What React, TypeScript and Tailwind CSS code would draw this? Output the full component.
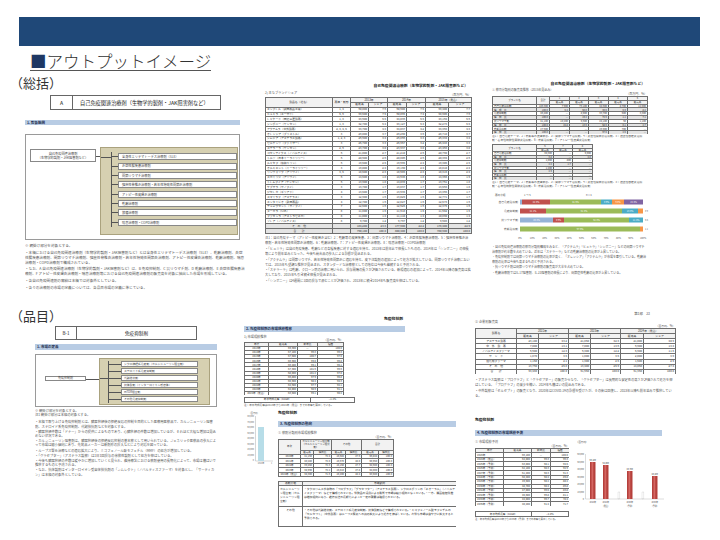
import React from "react";

type Cell = string | { t: string; c?: number; r?: number; a?: "l" | "c" | "r"; wrap?: boolean; tight?: boolean };

function Tbl({
  w,
  rows,
  h,
  head = 1,
  gray = [],
  fs = "text-[3px]",
}: {
  w: number[];
  rows: Cell[][];
  h: number | number[];
  head?: number;
  gray?: number[];
  fs?: string;
}) {
  const total = w.reduce((a, b) => a + b, 0);
  return (
    <table className={`table-fixed border-collapse leading-none text-[#333] ${fs}`} style={{ width: total }}>
      <colgroup>
        {w.map((x, i) => (
          <col key={i} style={{ width: x }} />
        ))}
      </colgroup>
      <tbody>
        {rows.map((r, ri) => (
          <tr
            key={ri}
            style={{ height: Array.isArray(h) ? h[ri] : h }}
            className={ri < head ? "bg-[#f2f2f2]" : gray.includes(ri) ? "bg-[#e4e4e4]" : "bg-white"}
          >
            {r.map((c, ci) => {
              const o = typeof c === "string" ? { t: c } : c;
              const a = o.a ?? (ri < head ? "c" : ci === 0 ? "l" : "r");
              const ws = o.tight
                ? "whitespace-normal leading-[2.9px]"
                : o.wrap
                  ? "whitespace-normal leading-[4px] align-top py-[1px]"
                  : "whitespace-nowrap";
              return (
                <td
                  key={ci}
                  colSpan={o.c}
                  rowSpan={o.r}
                  className={`border border-[#6f6f6f] p-0 px-[1px] overflow-hidden ${ws} ${a === "l" ? "text-left" : a === "c" ? "text-center" : "text-right"}`}
                >
                  {o.t}
                </td>
              );
            })}
          </tr>
        ))}
      </tbody>
    </table>
  );
}

const fmt = (n: number) => Math.round(n).toLocaleString("en-US");

function HeadBar({ label, cls }: { label: string; cls: string }) {
  return (
    <div className={`flex items-center bg-[#b8cce4] pl-[2px] text-[3.5px] font-bold leading-none text-[#1f2f4f] ${cls}`}>
      {label}
    </div>
  );
}

// ---------- top-left: 対象範囲 ----------
const topItems = [
  "全身性エリテマトーデス治療剤（SLE）",
  "炎症性腸疾患治療剤",
  "関節リウマチ治療剤",
  "強直性脊椎炎治療剤・若年性特発性関節炎治療剤",
  "アトピー性皮膚炎治療剤",
  "乾癬治療剤",
  "狼瘡治療剤",
  "喘息治療剤・COPD治療剤",
];

function TopLeft() {
  return (
    <div className="w-[248px] shrink-0">
      <div className="h-[14px] pl-[10px] text-[13px] leading-[14px] text-[#333]">（総括）</div>
      <div className="ml-[50px] mt-[5px] flex h-[15px] w-[171px] border border-[#666] text-[5.2px] leading-none">
        <div className="flex w-[22px] items-center justify-center border-r border-[#666]">A</div>
        <div className="flex flex-1 items-center pl-[7px]">自己免疫関連治療剤（生物学的製剤・JAK阻害剤など）</div>
      </div>
      <HeadBar label="1. 対象範囲" cls="ml-[25px] mt-[10px] h-[5px] w-[215px]" />
      <div className="ml-[25px] mt-[9px] flex h-[106px] w-[215px] items-start border border-[#9a9a9a] pl-[4px] pt-[12px]">
        <div className="mt-[2px] flex h-[13px] w-[66px] flex-col items-center justify-center border border-[#888] text-[3.2px] leading-[4px] text-[#444]">
          <span>自己免疫関連治療剤</span>
          <span>（生物学的製剤・JAK阻害剤など）</span>
        </div>
        <div className="mt-[8.5px] h-px w-[4px] bg-[#555]" />
        <div className="flex h-[88px] w-[138px] border border-[#aaa27e] bg-[#d6d0b1] pt-[4px]">
          <div className="mt-[4.5px] h-px w-[10px] bg-[#555]" />
          <div className="flex h-[75px] flex-col border-l border-[#555]">
            {topItems.map((t) => (
              <div key={t} className="flex h-[9.9px] items-center">
                <div className="h-px w-[6px] bg-[#555]" />
                <div className="flex h-[7px] w-[119px] items-center border border-[#888] bg-white pl-[3px] text-[3.2px] leading-none text-[#444]">
                  {t}
                </div>
              </div>
            ))}
          </div>
        </div>
      </div>
      <div className="ml-[25px] mt-[3px] h-[58px] w-[220px] overflow-hidden text-[3.6px] leading-[5px] text-[#555]">
        <p>※ 網掛け部分を対象とする。</p>
        <p className="mt-[2px]">
          ・本稿における自己免疫関連治療剤（生物学的製剤・JAK阻害剤など）とは全身性エリテマトーデス治療剤（SLE）、乾癬治療剤、炎症性腸疾患治療剤、関節リウマチ治療剤、強直性脊椎炎治療剤・若年性特発性関節炎治療剤、アトピー性皮膚炎治療剤、乾癬治療剤、喘息治療剤・COPD治療剤で構成されている。
        </p>
        <p className="mt-[1px]">
          ・なお、A 自己免疫関連治療剤（生物学的製剤・JAK阻害剤など）は、B 免疫抑制剤、C 抗リウマチ剤、D 乾癬治療剤、E 炎症性腸疾患治療剤、F アトピー性皮膚炎治療剤・喘息治療剤等における自己免疫関連治療剤の販売高を対象に抽出した市場を形成している。
        </p>
        <p className="mt-[2px]">・各自己免疫関連剤の需給は本稿では対象外としている。</p>
        <p className="mt-[2px]">・各々の治療剤の市場の定義については、各品目市場の定義に準じている。</p>
      </div>
    </div>
  );
}

// ---------- top-mid: ブランドシェア ----------
const brands = [
  "エンブレル（武田薬品工業）",
  "ヒュミラ（エーザイ）",
  "レミケード（田辺三菱製薬）",
  "シンポニー（ヤンセン）",
  "アクテムラ（中外製薬）",
  "オレンシア（ブリストル）",
  "シムジア（アステラス製薬）",
  "ゼルヤンツ（ファイザー）",
  "ステラーラ（ヤンセン）",
  "コセンティクス（ノバルティス）",
  "トルツ（日本イーライリリー）",
  "ルミセフ（協和キリン）",
  "オルミエント（イーライリリー）",
  "リンヴォック（アッヴィ）",
  "スカイリジ（アッヴィ）",
  "トレムフィア（ヤンセン）",
  "ケブザラ（サノフィ）",
  "ジセレカ（ギリアド）",
  "スマイラフ（アステラス）",
  "エンタイビオ（武田薬品）",
  "デュピクセント（サノフィ）",
  "ヌーカラ（GSK）",
  "ファセンラ（アストラゼネカ）",
  "ゾレア（ノバルティス）",
];
const bSales = [60000, 59500, 43600, 42700, 33700, 29000, 26600, 25700, 23700, 21000, 20600, 19500, 19000, 18500, 14500, 13900, 13700, 13500, 12900, 12700, 12500, 11800, 11000, 9700];
const bCodes = ["1, 4", "5, 6", "1, 3", "1, 3", "2, 3, 4, 5", "3", "1, 2, 3", "3", "2, 6", "6", "6", "6", "3", "3, 5", "6", "6", "3", "4", "3", "4", "7", "8", "8", "8"];

function brandRows(): Cell[][] {
  const rows: Cell[][] = [
    [{ t: "製品名（社名）", r: 2 }, { t: "薬価・剤形", r: 2 }, { t: "2013年", c: 2 }, { t: "2014年", c: 2 }, { t: "2015年（見込）", c: 2 }],
    ["販売高", "シェア", "販売高", "シェア", "販売高", "シェア"],
  ];
  brands.forEach((b, i) => {
    const s = bSales[i];
    rows.push([b, { t: bCodes[i], a: "c" }, fmt(s), (s / 7900).toFixed(1), fmt(s * 1.01), (s / 8000).toFixed(1), fmt(s * 0.99), (s / 7800).toFixed(1)]);
  });
  rows.push([{ t: "そ　の　他", a: "c" }, "", "184,200", "23.3", "177,900", "22.2", "178,400", "22.9"]);
  rows.push([{ t: "合　　計", a: "c" }, "", "790,100", "100.0", "800,400", "100.0", "780,900", "100.0"]);
  return rows;
}

function TopMid() {
  return (
    <div className="w-[227px] shrink-0 pl-[17px] pt-[8px]">
      <div className="h-[4px] pr-[7px] text-right text-[3.8px] font-bold leading-[4px]">自己免疫関連治療剤（生物学的製剤・JAK阻害剤など）</div>
      <div className="mt-[3px] h-[3px] text-[3.2px] leading-[3px] text-[#555]">2) 主なブランドシェア</div>
      <div className="h-[3px] w-[206px] text-right text-[3px] leading-[3px] text-[#555]">（百万円、%）</div>
      <div className="h-[137px] overflow-hidden">
        <Tbl w={[67, 18, 18, 19, 19, 19, 23, 23]} rows={brandRows()} h={4.86} head={2} gray={[26, 27]} fs="text-[2.8px]" />
      </div>
      <div className="mt-[2px] h-[60px] w-[206px] overflow-hidden text-[3.2px] leading-[4.7px] text-[#555]">
        <p>
          注1：自己免疫テーマ（アトピー性皮膚炎含む）2：乾癬等の皮膚疾患、3：関節リウマチ治療剤、4：炎症性腸疾患治療剤、5：強直性脊椎炎治療剤・若年性特発性関節炎治療剤、6：乾癬治療剤、7：アトピー性皮膚炎治療剤、8：喘息治療剤・COPD治療剤
        </p>
        <p className="mt-[2px]">
          ・「ヒュミラ」は自己免疫疾患、乾癬などの各種疾患に対する適応を持ち、2013年は前年比で伸長したものの、2014年は「シンポニー」の伸長等により前年並みとなった。今後も競合品の参入による影響が見込まれる。
        </p>
        <p className="mt-[1px]">
          ・「アクテムラ」は関節リウマチ、若年性特発性関節炎に適応を持ち、皮下注製剤の追加によって処方が拡大している。関節リウマチ治療においては、2015年も堅調な推移が見込まれ、スタンダードな治療薬としての地位は今後も継続すると予測される。
        </p>
        <p className="mt-[1px]">
          ・「ステラーラ」は乾癬、クローン病の治療に用いられ、投与間隔の長さが評価されている。新規適応の追加によって、2014年以降の販売高は拡大しており、2015年も引き続き伸長が見込まれる。
        </p>
        <p className="mt-[1px]">・「シンポニー」は4週間に1回の投与で済むことが評価され、2013年に続き2014年も販売高を伸ばしている。</p>
      </div>
    </div>
  );
}

// ---------- top-right: 薬効分類別 ----------
const cls8 = ["自己免疫治療剤", "構　成　比", "免疫抑制剤", "構　成　比", "抗リウマチ剤", "構　成　比", "乾癬治療剤", "構　成　比"];
function clsRows1(): Cell[][] {
  const v = [
    ["146,300", "7,900", "73,100", "44,600", "8,700", "12,000"],
    ["100.0", "5.4", "50.0", "30.5", "5.9", "8.2"],
    ["46,400", "—", "8,900", "33,700", "500", "3,300"],
    ["100.0", "—", "19.2", "72.6", "1.1", "7.1"],
    ["41,100", "10,200", "5,600", "24,100", "60", "1,100"],
    ["100.0", "24.8", "13.6", "58.6", "0.1", "2.7"],
    ["27,600", "—", "—", "26,900", "700", "—"],
    ["100.0", "—", "—", "97.5", "2.5", "—"],
  ];
  return [
    [{ t: "ブランド名", r: 2 }, { t: "合計", r: 2 }, "1", "2", "3", "4", "5"],
    ["販売高", "販売高", "販売高", "販売高", "販売高"],
    ...cls8.map((n, i) => [n, ...v[i]] as Cell[]),
  ];
}
function clsRows2(): Cell[][] {
  const v = [
    ["30,300", "—", "5,900"],
    ["3.8", "—", "4.0"],
    ["1,000", "800", "—"],
    ["2.2", "1.7", "—"],
    ["1,200", "—", "—"],
    ["2.9", "—", "—"],
    ["—", "—", "—"],
    ["—", "—", "—"],
  ];
  return [
    [{ t: "ブランド名", r: 2 }, "6", "7", "8"],
    ["販売高", "販売高", "販売高"],
    ...cls8.map((n, i) => [n, ...v[i]] as Cell[]),
  ];
}

const stack: [string, number][][] = [
  [["#95b3d7", 2], ["#c0504d", 28], ["#9bbb59", 51], ["#4bacc6", 11], ["#f79646", 12], ["#8064a2", 19]],
  [["#c0504d", 26], ["#9bbb59", 76], ["#4bacc6", 16], ["#f79646", 5]],
  [["#95b3d7", 33], ["#c0504d", 11], ["#9bbb59", 65], ["#4bacc6", 14]],
  [["#9bbb59", 120], ["#f79646", 3]],
];
const stackLabels = ["自己免疫治療剤", "免疫抑制剤", "抗リウマチ剤", "乾癬治療剤"];

function StackChart() {
  return (
    <svg width="158" height="50" viewBox="0 0 158 50" className="block">
      <g fontFamily="Noto Sans CJK JP, sans-serif" fill="#555">
        <text x="3" y="5" fontSize="2.6">薬効分類</text>
        <text x="32" y="5" fontSize="2.6">1 → 5</text>
        <text x="94" y="5" fontSize="2.6">n = 4</text>
        {stack.map((row, ri) => {
          let x = 28;
          const y = 8.5 + ri * 9;
          return (
            <g key={ri}>
              <text x="26" y={y + 3.6} fontSize="2.8" textAnchor="end">
                {stackLabels[ri]}
              </text>
              {row.map(([c, wv], si) => {
                const rx = x;
                x += wv;
                return (
                  <g key={si}>
                    <rect x={rx} y={y} width={wv} height="5" fill={c} />
                    {wv > 10 && (
                      <text x={rx + wv / 2} y={y + 3.4} fontSize="2.2" fill="#fff" textAnchor="middle">
                        {(wv / 1.23).toFixed(1)}%
                      </text>
                    )}
                  </g>
                );
              })}
              <text x="153" y={y + 3.6} fontSize="2.2">{["", "8.9", "5.5", "1.1"][ri]}</text>
            </g>
          );
        })}
        {Array.from({ length: 11 }, (_, i) => (
          <text key={i} x={28 + i * 12.3} y="48" fontSize="2.4" textAnchor="middle">
            {i * 10}%
          </text>
        ))}
      </g>
    </svg>
  );
}

function TopRight() {
  return (
    <div className="ml-[17px] w-[158px] shrink-0 pt-[6px]">
      <div className="h-[4px] pr-[5px] text-right text-[3.8px] font-bold leading-[4px]">自己免疫関連治療剤（生物学的製剤・JAK阻害剤など）</div>
      <div className="mt-[3px] h-[3.5px] text-[3px] leading-[3.5px] text-[#555]">① 薬効分類別の販売高推移（2015年見込み）</div>
      <div className="h-[3.5px] w-[155px] text-right text-[3px] leading-[3.5px] text-[#555]">（百万円、%）</div>
      <div className="h-[38px] overflow-hidden">
        <Tbl w={[44, 13, 20, 19, 20, 19, 20]} rows={clsRows1()} h={3.8} head={2} gray={[3, 5, 7, 9]} fs="text-[2.5px]" />
      </div>
      <p className="mt-[1px] h-[7px] w-[155px] overflow-hidden text-[2.8px] leading-[3.5px] text-[#555]">
        注1：自己免疫テーマ、2：乾癬等の皮膚疾患、3：関節リウマチ治療剤、4：炎症性腸疾患治療剤、5：強直性脊椎炎治療剤・若年性特発性関節炎治療剤、6：乾癬治療剤、7：アトピー性皮膚炎治療剤
      </p>
      <div className="mt-[2px] h-[36px] overflow-hidden">
        <Tbl w={[44, 17, 19, 20]} rows={clsRows2()} h={3.6} head={2} gray={[3, 5, 7, 9]} fs="text-[2.5px]" />
      </div>
      <p className="mt-[1px] h-[7px] w-[155px] overflow-hidden text-[2.8px] leading-[3.5px] text-[#555]">
        注1：自己免疫テーマ、2：乾癬等の皮膚疾患、3：関節リウマチ治療剤、4：炎症性腸疾患治療剤、5：強直性脊椎炎治療剤・若年性特発性関節炎治療剤、6：乾癬治療剤、7：アトピー性皮膚炎治療剤
      </p>
      <div className="mt-[3px]">
        <StackChart />
      </div>
      <div className="mt-[4px] h-[44px] w-[155px] overflow-hidden text-[3px] leading-[4.5px] text-[#555]">
        <p>
          ・自己免疫関連治療剤の薬効分類別構成をみると、「アクテムラ」「ヒュミラ」「シンポニー」などの関節リウマチ治療剤が約半数を占めている。近年は「ステラーラ」などの乾癬治療剤の比率が上昇している。
        </p>
        <p className="mt-[1px]">
          ・免疫抑制剤では関節リウマチ治療剤の比率が高く、「オレンシア」「アクテムラ」が市場を牽引している。乾癬治療剤の比率は今後も高まるものと予測される。
        </p>
        <p className="mt-[1px]">・抗リウマチ剤は関節リウマチ治療剤の販売高が大半を占めている。</p>
        <p className="mt-[1px]">・乾癬治療剤ではIL-17阻害剤、IL-23阻害剤の伸長により、関節症性乾癬の比率が上昇している。</p>
      </div>
    </div>
  );
}

// ---------- bottom-left: 市場の定義 ----------
const botItems = [
  "シクロ神経系免疫剤（カルシニューリン阻害剤）",
  "ステロイド系免疫抑制剤",
  "代謝拮抗剤",
  "抗体製剤（インターロイキン受容体）",
  "mTOR阻害剤",
  "その他免疫抑制剤",
];

function BottomLeft() {
  return (
    <div className="w-[244px] shrink-0">
      <div className="mt-[1px] h-[14px] pl-[10px] text-[13px] leading-[14px] text-[#333]">（品目）</div>
      <div className="ml-[55px] mt-[3px] flex h-[14px] w-[142px] border border-[#666] text-[4.6px] leading-none">
        <div className="flex w-[21px] items-center justify-center border-r border-[#666]">B-1</div>
        <div className="flex flex-1 items-center justify-center">免疫抑制剤</div>
      </div>
      <HeadBar label="1. 市場の定義" cls="ml-[35px] mt-[4px] h-[6px] w-[182px]" />
      <div className="ml-[35px] mt-[4px] flex h-[53px] w-[182px] items-start border border-[#9a9a9a] pl-[9px] pt-[3px]">
        <div className="mt-[18px] flex h-[5px] w-[41px] items-center justify-center border border-[#888] text-[3px] leading-none text-[#444]">
          免疫抑制剤
        </div>
        <div className="mt-[20.5px] h-px w-[13px] bg-[#555]" />
        <div className="flex h-[47px] w-[111px] border border-[#aaa27e] bg-[#d6d0b1] pt-[1.5px]">
          <div className="mt-[17.5px] h-px w-[8px] bg-[#555]" />
          <div className="flex h-[42px] flex-col border-l border-[#555]">
            {botItems.map((t) => (
              <div key={t} className="flex h-[7px] items-center">
                <div className="h-px w-[12px] bg-[#555]" />
                <div className="flex h-[5.5px] w-[77px] items-center border border-[#888] bg-white pl-[2px] text-[2.8px] leading-none text-[#444]">
                  {t}
                </div>
              </div>
            ))}
          </div>
        </div>
      </div>
      <div className="ml-[35px] mt-[2px] h-[90px] w-[184px] overflow-hidden text-[3.3px] leading-[4.2px] text-[#555]">
        <p>※ 網掛け部分を対象とする。</p>
        <p>注1 網掛け部分は本稿の対象とする。</p>
        <p className="mt-[3px]">
          ・本稿で取り上げる免疫抑制剤とは、臓器移植後の拒絶反応の抑制を目的とした医療用医薬品で、カルシニューリン阻害剤、ステロイド系免疫抑制剤、代謝拮抗剤などを対象とする。
        </p>
        <p className="mt-[1px]">
          ・臓器移植件数は「ドナー」からの提供によるものであり、心臓移植の件数は増加しているが、それほど大幅な増加は見込めない状況である。
        </p>
        <p className="mt-[1px]">
          ・カルシニューリン阻害剤は、臓器移植後の拒絶反応抑制の基本薬として用いられている。ジェネリック医薬品の参入によって市場は縮小傾向にあり、先発品メーカーは新剤形の投入などにより対応を図っている。
        </p>
        <p className="mt-[1px]">・ループス腎炎治療などの適応拡大により、ミコフェノール酸モフェチル（MMF）の処方が増加している。</p>
        <p className="mt-[1px]">・「グラセプター」（アステラス製薬）は1日1回投与の徐放性製剤として処方を伸ばしている。</p>
        <p className="mt-[1px]">
          ・今後も臓器移植の件数は緩やかに増加していくと見られ、維持療法における薬剤使用の長期化によって、市場は横ばいで推移するものと予測される。
        </p>
        <p className="mt-[1px]">
          ・なお、抗体製剤はインターロイキン受容体拮抗剤の「シムレクト」（ノバルティスファーマ）を対象とし、「サーティカン」は本稿の対象外としている。
        </p>
      </div>
    </div>
  );
}

// ---------- bottom-mid ----------
const yearsA = ["2013年", "2014年", "2015年", "2016年", "2017年", "2018年", "2019年", "2020年", "2021年", "2022年", "2023年", "2024年（見込）"];
const salesA = [59300, 57100, 57500, 56900, 56400, 57300, 58000, 56800, 55900, 54600, 54000, 53500];
function rowsA(): Cell[][] {
  return [
    ["年次", "販売高", "前年比", "指数"],
    ...yearsA.map((y, i) => [
      { t: y, a: "c" as const },
      fmt(salesA[i]),
      i === 0 ? { t: "—", a: "c" as const } : ((salesA[i] / salesA[i - 1]) * 100).toFixed(1),
      ((salesA[i] / salesA[0]) * 100).toFixed(1),
    ]),
  ];
}
function rowsB(): Cell[][] {
  const d = [
    ["2020年", "41,160", "72.4", "15,684", "27.6", "56,844", "100.0"],
    ["2021年", "40,280", "72.0", "15,670", "28.0", "55,950", "100.0"],
    ["2022年", "39,450", "72.3", "15,150", "27.7", "54,600", "100.0"],
    ["2023年", "38,990", "72.2", "15,010", "27.8", "54,000", "100.0"],
    ["2024年（見込）", "38,300", "71.6", "15,200", "28.4", "53,500", "100.0"],
  ];
  return [
    [{ t: "年次", r: 2 }, { t: "カルシニューリン阻害剤（カルシニューリン阻害剤）", c: 2, tight: true, a: "c" }, { t: "その他", c: 2 }, { t: "合計", c: 2 }],
    ["販売高", "構成比", "販売高", "構成比", "販売高", "構成比"],
    ...d.map((r) => [{ t: r[0], a: "c" as const }, ...r.slice(1)]),
  ];
}
function rowsC(): Cell[][] {
  return [
    ["薬剤分類", "市場動向"],
    [
      { t: "カルシニューリン阻害剤（カルシニューリン阻害剤）", wrap: true, a: "l" },
      {
        t: "・タクロリムス水和物の「プログラフ」「グラセプター」（アステラス製薬）、シクロスポリンの「ネオーラル」（ノバルティスファーマ）などで構成されている。後発品の浸透による影響で市場は縮小傾向となっている。・一方、臓器移植件数は増加傾向にあり、維持療法の長期化によって一定の需要は確保されている。",
        wrap: true,
        a: "l",
      },
    ],
    [
      { t: "その他", wrap: true, a: "c" },
      {
        t: "・その他は代謝拮抗剤、ステロイド系免疫抑制剤、抗体製剤などで構成されている。・ミコフェノール酸モフェチルの「セルセプト」（中外製薬）はループス腎炎への適応拡大により処方を伸ばしている。今後も市場は緩やかに拡大すると予測される。",
        wrap: true,
        a: "l",
      },
    ],
  ];
}

function SmallBehindChart() {
  const labels = ["80,000", "70,000", "60,000", "50,000", "40,000", "30,000", "20,000", "10,000", "0"];
  return (
    <svg width="29" height="53" viewBox="0 0 29 53" className="block shrink-0">
      <g fontFamily="Noto Sans CJK JP, sans-serif" fill="#666">
        <text x="6" y="2.5" fontSize="2.2">(百万円)</text>
        {labels.map((l, i) => (
          <text key={l} x="10" y={6 + i * 5.5} fontSize="2.2" textAnchor="end">
            {l}
          </text>
        ))}
        <line x1="11.5" y1="5" x2="11.5" y2="50" stroke="#999" strokeWidth="0.4" />
        <line x1="11.5" y1="50" x2="29" y2="50" stroke="#999" strokeWidth="0.4" />
        <rect x="14" y="16" width="6" height="34" fill="#b7dde8" />
        <text x="17" y="52.5" fontSize="2" textAnchor="middle">2013年</text>
        <text x="27" y="52.5" fontSize="2">1</text>
      </g>
    </svg>
  );
}

function BottomMid() {
  return (
    <div className="w-[231px] shrink-0">
      <div className="mt-[9px] h-[4px] w-[159px] text-right text-[3.8px] font-bold leading-[4px]">免疫抑制剤</div>
      <HeadBar label="2. 免疫抑制剤の市場規模推移" cls="mt-[5px] h-[6px] w-[161px]" />
      <div className="mt-[3px] h-[4px] text-[3.2px] leading-[4px] text-[#555]">1) 市場規模推移</div>
      <div className="h-[3px] w-[99px] text-right text-[2.8px] leading-[3px] text-[#555]">（百万円、%）</div>
      <div className="h-[53px] overflow-hidden">
        <Tbl w={[24, 29, 20, 26]} rows={rowsA()} h={4.08} head={1} fs="text-[2.6px]" />
      </div>
      <div className="mt-[2px] flex h-[5.5px] w-[111px] border border-[#6f6f6f] text-[2.6px] leading-none text-[#333]">
        <div className="flex w-[66px] items-center justify-center border-r border-[#6f6f6f]">年平均成長率（CAGR）</div>
        <div className="flex flex-1 items-center justify-center">−1.1%</div>
      </div>
      <p className="mt-[1px] h-[3px] whitespace-nowrap text-[2.6px] leading-[3px] text-[#555]">注：年平均成長率は2013年から2024年（見込）までの年率を算出している。</p>
      <div className="mt-[4px] flex items-start gap-[5px]">
        <SmallBehindChart />
        <div className="w-[178px]">
          <div className="h-[4px] text-[3.8px] font-bold leading-[4px]">免疫抑制剤</div>
          <HeadBar label="3. 免疫抑制剤の動向" cls="mt-[6px] h-[6px] w-[178px]" />
          <div className="mt-[4px] h-[4px] text-[3.2px] leading-[4px] text-[#555]">① 薬剤分類別市場規模推移</div>
          <div className="h-[4px] w-[115px] text-right text-[2.8px] leading-[4px] text-[#555]">（百万円、%）</div>
          <div className="h-[40px] overflow-hidden">
            <Tbl w={[22, 13, 18, 14, 16, 17, 15]} rows={rowsB()} h={[11, 4, 4.6, 4.6, 4.6, 4.6, 4.6]} head={2} fs="text-[2.5px]" />
          </div>
          <div className="mt-[2px] h-[46px] overflow-hidden">
            <Tbl w={[24, 154]} rows={rowsC()} h={[4, 21, 20]} head={1} fs="text-[2.8px]" />
          </div>
        </div>
      </div>
    </div>
  );
}

// ---------- bottom-right ----------
function rowsD(): Cell[][] {
  const d = [
    ["アステラス製薬", "23,100", "43.2", "21,850", "42.3", "21,000", "40.9"],
    ["中　外　製　薬", "7,000", "13.1", "7,000", "13.6", "6,900", "13.4"],
    ["ノバルティスファーマ", "6,600", "12.3", "6,300", "12.2", "5,900", "11.5"],
    ["サ　ン　ド", "1,870", "3.5", "1,800", "3.5", "2,000", "3.9"],
    ["旭化成ファーマ", "1,150", "2.1", "1,300", "2.5", "1,500", "2.9"],
    ["そ　の　他", "13,760", "25.8", "13,400", "25.9", "14,050", "27.4"],
    ["合　　計", "53,480", "100.0", "51,650", "100.0", "51,350", "100.0"],
  ];
  return [
    [{ t: "製薬名", r: 2 }, { t: "2022年", c: 2 }, { t: "2023年", c: 2 }, { t: "2024年（見込）", c: 2 }],
    ["販売高", "シェア", "販売高", "シェア", "販売高", "シェア"],
    ...d.map((r) => [{ t: r[0], a: "c" as const }, ...r.slice(1)]),
  ];
}
const yearsE = ["2023年", "2024年（見込）", "2025年（予測）", "2026年（予測）", "2027年（予測）", "2028年（予測）", "2029年（予測）", "2030年（予測）", "2031年（予測）", "2032年（予測）", "2033年（予測）", "2035年（予測）"];
const salesE = [56100, 54000, 53000, 52100, 51200, 50400, 49500, 48700, 47000, 45500, 44000, 40200];
function rowsE(): Cell[][] {
  return [
    ["年次", "販売高", "前年比", "指数"],
    ...yearsE.map((y, i) => [
      { t: y, a: "l" as const },
      fmt(salesE[i]),
      i === 0 ? { t: "—", a: "c" as const } : ((salesE[i] / salesE[i - 1]) * 100).toFixed(1),
      ((salesE[i] / salesE[0]) * 100).toFixed(1),
    ]),
  ];
}

function ForecastChart() {
  const labels = ["60,000", "50,000", "40,000", "30,000", "20,000", "10,000", "0"];
  const bars = [
    { x: 14, top: 22, v: "56,100", l1: "2023年", l2: "" },
    { x: 27, top: 25, v: "54,000", l1: "2024年", l2: "(見込)" },
    { x: 51, top: 31, v: "48,700", l1: "2030年", l2: "(予測)" },
    { x: 76, top: 36, v: "40,200", l1: "2035年", l2: "(予測)" },
  ];
  return (
    <svg width="90" height="72" viewBox="0 0 90 72" className="block shrink-0">
      <g fontFamily="Noto Sans CJK JP, sans-serif" fill="#555">
        <text x="0" y="3" fontSize="2.4">（百万円）</text>
        {labels.map((l, i) => (
          <text key={l} x="8" y={15 + i * 7.5} fontSize="2.2" textAnchor="end">
            {l}
          </text>
        ))}
        <line x1="9.5" y1="14" x2="9.5" y2="59" stroke="#aaa" strokeWidth="0.4" />
        <line x1="9.5" y1="59" x2="88" y2="59" stroke="#aaa" strokeWidth="0.4" />
        {bars.map((b) => (
          <g key={b.x}>
            <rect x={b.x} y={b.top} width="5.5" height={59 - b.top} fill="#b5403c" />
            <rect x={b.x + 1.5} y={b.top} width="1.8" height={59 - b.top} fill="#d46662" />
            <text x={b.x + 2.75} y={b.top - 1.5} fontSize="2.1" textAnchor="middle" fill="#333">
              {b.v}
            </text>
            <text x={b.x + 2.75} y="63" fontSize="2.1" textAnchor="middle">
              {b.l1}
            </text>
            <text x={b.x + 2.75} y="67" fontSize="2.1" textAnchor="middle">
              {b.l2}
            </text>
          </g>
        ))}
        <rect x="42" y="52" width="1.6" height="7" fill="none" stroke="#999" strokeWidth="0.3" strokeDasharray="0.6 0.4" />
        <rect x="66" y="52" width="1.6" height="7" fill="none" stroke="#999" strokeWidth="0.3" strokeDasharray="0.6 0.4" />
      </g>
    </svg>
  );
}

function BottomRight() {
  return (
    <div className="flex h-[231px] w-[205px] shrink-0 flex-col">
      <div className="mt-[4px] h-[4px] w-[175px] shrink-0 text-right text-[3.4px] leading-[4px] text-[#555]">第1部　23</div>
      <div className="mt-[4px] h-[4px] shrink-0 text-[3.2px] leading-[4px] text-[#555]">② 企業別販売高</div>
      <div className="h-[4px] w-[200px] shrink-0 text-right text-[2.8px] leading-[4px] text-[#555]">（百万円、%）</div>
      <div className="h-[46px] shrink-0 overflow-hidden">
        <Tbl w={[41, 22, 30, 22, 30, 23, 32]} rows={rowsD()} h={5.1} head={2} fs="text-[2.8px]" />
      </div>
      <div className="mt-[4px] h-[26px] w-[200px] shrink-0 overflow-hidden text-[3.2px] leading-[4.5px] text-[#555]">
        <p>
          ・アステラス製薬は「プログラフ」と「グラセプター」の販売からなり、「グラセプター」は長期的な安定性の高さが評価されて処方を伸ばしている。「プログラフ」の減少を補い、2024年も横ばいの見込みである。
        </p>
        <p className="mt-[2px]">・中外製薬は「セルセプト」の販売となり、2020年はCOVID-19の影響を受けたが、その後は回復し、2023年以降も前年並みで推移している。</p>
      </div>
      <div className="mt-[14px] h-[4px] shrink-0 text-[3.8px] font-bold leading-[4px]">免疫抑制剤</div>
      <HeadBar label="4. 免疫抑制剤の市場規模予測" cls="mt-[8px] h-[6px] w-[187px] shrink-0" />
      <div className="mt-[4px] flex h-[80px] shrink-0 items-start gap-[7px]">
        <div className="w-[94px] shrink-0">
          <div className="h-[4px] text-[3.2px] leading-[4px] text-[#555]">① 市場規模予測</div>
          <div className="h-[4px] text-right text-[2.8px] leading-[4px] text-[#555]">（百万円、%）</div>
          <div className="h-[58px] overflow-hidden">
            <Tbl w={[28, 28, 19, 19]} rows={rowsE()} h={4.45} head={1} fs="text-[2.6px]" />
          </div>
          <div className="mt-[5px] flex h-[6px] w-[94px] border border-[#6f6f6f] text-[2.6px] leading-none text-[#333]">
            <div className="flex w-[56px] items-center justify-center border-r border-[#6f6f6f]">年平均成長率（CAGR）</div>
            <div className="flex flex-1 items-center justify-center">−2.8%</div>
          </div>
          <p className="mt-[1px] h-[3px] whitespace-nowrap text-[2.4px] leading-[3px] text-[#555]">注：年平均成長率は2023年から2035年（予測）までの年率を算出している。</p>
        </div>
        <ForecastChart />
      </div>
    </div>
  );
}

export default function App() {
  return (
    <div className="relative h-[540px] w-[720px] overflow-hidden bg-white font-['Noto_Sans_CJK_JP','Noto_Sans',sans-serif] text-[#222]">
      <div className="pl-[19px] pt-[17px]">
        <div className="h-[29px] w-[681px] bg-[#1f4878]" />
      </div>
      <div className="ml-[30px] mt-[3px] h-[20px]">
        <span className="inline-block border-b-[1.5px] border-[#555] text-[16.5px] font-light leading-[17px] text-[#333]">
          <span className="text-[#1f3864]">■</span>アウトプットイメージ
        </span>
      </div>
      <div className="mt-[7px] flex h-[232px] items-start">
        <TopLeft />
        <TopMid />
        <TopRight />
      </div>
      <div className="flex h-[231px] items-start">
        <BottomLeft />
        <BottomMid />
        <BottomRight />
      </div>
    </div>
  );
}
